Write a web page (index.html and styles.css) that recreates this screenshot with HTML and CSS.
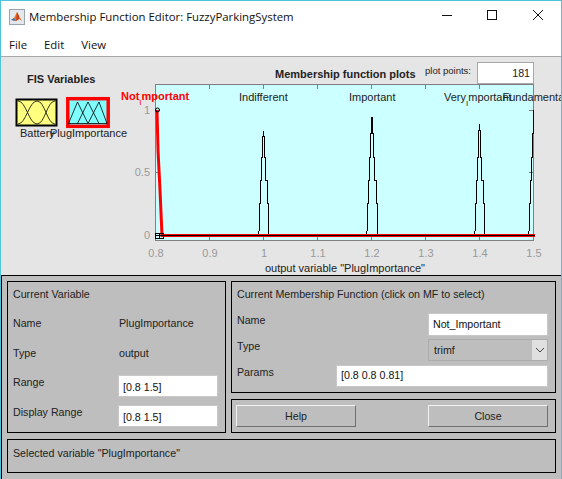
FILE: index.html
```html
<!DOCTYPE html>
<html lang="en">
<head>
    <meta charset="UTF-8">
    <meta name="viewport" content="width=device-width, initial-scale=1.0">
    <title>Membership Function Editor</title>
    <link rel="stylesheet" href="styles.css">
</head>
<body>
    <div class="window">
        <!-- Title bar -->
        <div class="titlebar">
            <svg class="app-icon" width="16" height="16" viewBox="0 0 16 16">
                <rect x="0.5" y="0.5" width="15" height="15" fill="#e4e8ec" stroke="#9aa4ae"/>
                <path d="M2 11 L5 9 L8 3 L10 7 L13 12 L10 10 L7 12 Z" fill="#e8762c"/>
                <path d="M2 11 L5 9 L7 12 Z" fill="#3c78b4"/>
                <path d="M8 3 L10 7 L10 10 L7 12 Z" fill="#c8401c"/>
            </svg>
            <span class="title-text">Membership Function Editor: FuzzyParkingSystem</span>
            <div class="window-buttons">
                <svg class="minimize" width="12" height="12" viewBox="0 0 12 12"><path d="M1 5.5 H11" stroke="#111" fill="none"/></svg>
                <svg width="12" height="12" viewBox="0 0 12 12"><rect x="2.5" y="0.5" width="9" height="9" stroke="#111" fill="none"/></svg>
                <svg width="12" height="12" viewBox="0 0 12 12"><path d="M2 0 L12 10 M12 0 L2 10" stroke="#111" fill="none"/></svg>
            </div>
        </div>

        <!-- Menu bar -->
        <div class="menubar">
            <span>File</span>
            <span>Edit</span>
            <span>View</span>
        </div>

        <!-- Variables and plot -->
        <div class="figure">
            <svg class="canvas" width="560" height="218" viewBox="1 57 560 218">
                <text class="bold-label" x="27" y="83">FIS Variables</text>

                <!-- Battery icon -->
                <rect x="16.5" y="99.5" width="40" height="26" fill="#ffff80" stroke="#000" stroke-width="2"/>
                <path class="mf-thin" d="M18 101 C26 101 29 124 37 124 M18 124 C26 124 29 101 37 101 C45 101 47 124 55 124 M37 124 C45 124 47 101 55 101"/>
                <text class="label" x="20" y="137">Battery</text>

                <!-- PlugImportance icon -->
                <rect x="67.8" y="98.7" width="40.4" height="27.6" fill="#80ffff" stroke="#f00" stroke-width="3.5"/>
                <path class="mf-thin" d="M68.5 123.5 L77.5 102 L88 123.5 M77.5 123.5 L88 102 L99 123.5 M68.5 123.5 H107 M88 123.5 L99 102 L107 123.5"/>
                <text class="label" x="50" y="137">PlugImportance</text>

                <!-- Axes -->
                <rect class="axes" x="155.5" y="84.5" width="378" height="156"/>
                <path class="ticks" d="M209.5 240 V236 M263.5 240 V236 M317.5 240 V236 M371.5 240 V236 M425.5 240 V236 M479.5 240 V236 M209.5 85 V89 M263.5 85 V89 M317.5 85 V89 M371.5 85 V89 M425.5 85 V89 M479.5 85 V89 M156 110.5 H160 M156 172.5 H160 M533 110.5 H529 M533 172.5 H529"/>

                <text class="tick-label" x="150" y="114" text-anchor="end">1</text>
                <text class="tick-label" x="150" y="176" text-anchor="end">0.5</text>
                <text class="tick-label" x="150" y="239" text-anchor="end">0</text>
                <text class="tick-label" x="156" y="257" text-anchor="middle">0.8</text>
                <text class="tick-label" x="210" y="257" text-anchor="middle">0.9</text>
                <text class="tick-label" x="264" y="257" text-anchor="middle">1</text>
                <text class="tick-label" x="318" y="257" text-anchor="middle">1.1</text>
                <text class="tick-label" x="372" y="257" text-anchor="middle">1.2</text>
                <text class="tick-label" x="426" y="257" text-anchor="middle">1.3</text>
                <text class="tick-label" x="480" y="257" text-anchor="middle">1.4</text>
                <text class="tick-label" x="534" y="257" text-anchor="middle">1.5</text>

                <text class="bold-label" x="275" y="78">Membership function plots</text>
                <text class="label" x="345" y="272" text-anchor="middle">output variable "PlugImportance"</text>

                <!-- Membership functions -->
                <path class="mf" d="M257.5 235 L259 231 V203 H260 V180 H261.5 V157 H262.5 V136 H263.5 V131 V136 H264.5 V157 H265.5 V180 H267 V203 H268 V231 L269.5 235"/>
                <path class="mf" d="M365.5 235 L367 231 V203 H368 V180 H369.5 V157 H370.5 V133 H371.5 V117 H372.5 V133 H373.5 V157 H374.5 V180 H376 V203 H377 V231 L378.5 235"/>
                <path class="mf" d="M473.5 235 L475 231 V203 H476 V180 H477.5 V157 H478.5 V130 H479.5 V124 V130 H480.5 V157 H481.5 V180 H483 V203 H484 V231 L485.5 235"/>
                <path class="mf" d="M527.5 235 L529 231 V203 H530 V180 H531.5 V157 H532.5 V133 H533.5 V110"/>
                <path class="mf-red" d="M157 110 L158 150 L160 190 L162 235.5 H535"/>
                <path class="mf" d="M156 235.5 H535"/>
                <path class="handle" d="M155.5 233.5 H163.5 V238.5 H155.5 Z M159.5 233.5 V238.5"/>
                <circle class="handle-dot" cx="157.5" cy="110" r="2"/>

                <!-- MF names -->
                <text class="mf-name selected" x="121" y="100">Not<tspan class="sub" dy="5">I</tspan><tspan dy="-5">mportant</tspan></text>
                <text class="mf-name" x="239" y="101">Indifferent</text>
                <text class="mf-name" x="349" y="101">Important</text>
                <text class="mf-name" x="444" y="101">Very<tspan class="sub" dy="5">I</tspan><tspan dy="-5">mportant</tspan></text>
                <text class="mf-name" x="502.5" y="101">Fundamental</text>
            </svg>
            <span class="plot-points-label">plot points:</span>
            <div class="plot-points">181</div>
        </div>

        <!-- Controls -->
        <div class="controls">
            <div class="panels">
                <div class="panel variable-panel">
                    <div class="panel-title">Current Variable</div>
                    <div class="variable-row"><span>Name</span><span class="value">PlugImportance</span></div>
                    <div class="variable-row"><span>Type</span><span class="value">output</span></div>
                    <div class="variable-row field-row first-field"><span>Range</span><div class="field range-field">[0.8 1.5]</div></div>
                    <div class="variable-row field-row"><span>Display Range</span><div class="field range-field">[0.8 1.5]</div></div>
                </div>
                <div class="right-column">
                    <div class="panel mf-panel">
                        <div class="panel-title">Current Membership Function (click on MF to select)</div>
                        <div class="mf-row"><span>Name</span><div class="field mf-field">Not_Important</div></div>
                        <div class="mf-row"><span>Type</span>
                            <div class="select">
                                <span class="select-value">trimf</span>
                                <div class="select-arrow">
                                    <svg width="10" height="6" viewBox="0 0 10 6"><path d="M1 1 L5 5 L9 1" stroke="#444" fill="none"/></svg>
                                </div>
                            </div>
                        </div>
                        <div class="mf-row"><span>Params</span><div class="field params-field">[0.8 0.8 0.81]</div></div>
                    </div>
                    <div class="panel button-panel">
                        <div class="button">Help</div>
                        <div class="button">Close</div>
                    </div>
                </div>
            </div>
            <div class="panel status">Selected variable "PlugImportance"</div>
        </div>
    </div>
</body>
</html>
```

FILE: styles.css
```css
/* Basic Styling */
body {
    margin: 0;
    width: 562px;
    height: 479px;
    overflow: hidden;
    font-family: "Liberation Sans", Arial, sans-serif;
    font-size: 10.67px;
    color: #222;
}

.window {
    height: 478px;
    border: 1px solid #4fc3dc;
    display: flex;
    flex-direction: column;
    background: #e5e5e5;
}

/* Title bar */
.titlebar {
    height: 31px;
    display: flex;
    align-items: center;
    background: #fff;
    padding-left: 8px;
}

.app-icon {
    margin-right: 4px;
}

.title-text {
    font-family: "Open Sans", sans-serif;
    font-size: 11.4px;
    color: #111;
}

.window-buttons {
    margin-left: auto;
    margin-bottom: 1px;
    display: flex;
    gap: 34px;
    padding-right: 18px;
}

.minimize {
    margin-right: -2px;
}

/* Menu bar */
.menubar {
    height: 24px;
    display: flex;
    gap: 17px;
    padding-left: 8px;
    align-items: center;
    background: #fff;
    border-bottom: 1px solid #a8a8a8;
    font-family: "Open Sans", sans-serif;
    font-size: 11.4px;
    color: #111;
}

/* Figure */
.figure {
    position: relative;
    height: 218px;
}

.canvas {
    display: block;
}

.label {
    font-size: 11px;
    fill: #222;
}

.bold-label {
    font-size: 11px;
    font-weight: bold;
    fill: #222;
}

.tick-label {
    font-size: 11px;
    fill: #999;
}

.axes {
    fill: #ccffff;
    stroke: #808080;
}

.ticks {
    stroke: #808080;
    fill: none;
}

.mf {
    fill: none;
    stroke: #000;
    shape-rendering: crispEdges;
}

.mf-thin {
    fill: none;
    stroke: #000;
    stroke-width: 0.8;
}

.mf-red {
    fill: none;
    stroke: #f00;
    stroke-width: 3;
}

.handle {
    fill: none;
    stroke: #000;
    shape-rendering: crispEdges;
}

.handle-dot {
    fill: none;
    stroke: #000;
}

.mf-name {
    font-size: 11px;
    fill: #222;
}

.mf-name.selected {
    font-weight: bold;
    fill: #f00;
}

.sub {
    font-size: 8px;
    font-weight: normal;
}

.plot-points-label {
    position: absolute;
    left: 424px;
    top: 8px;
    font-size: 9.5px;
}

.plot-points {
    position: absolute;
    left: 476px;
    top: 5px;
    width: 57px;
    height: 22px;
    box-sizing: border-box;
    background: #fff;
    border: 1px solid #a8a8a8;
    text-align: right;
    padding: 4px 3px 0 0;
}

/* Controls */
.controls {
    flex: 1;
    background: #bebebe;
    border-top: 1px solid #000;
    border-left: 1px solid #000;
    padding: 5px 5px 5px 5px;
    display: flex;
    flex-direction: column;
    gap: 6px;
}

.panels {
    display: flex;
    gap: 5px;
}

.panel {
    border: 1px solid #000;
    box-sizing: border-box;
}

.panel-title {
    height: 13px;
}

.variable-panel {
    width: 219px;
    height: 152px;
    padding: 6px 5px;
}

.variable-panel .panel-title {
    margin-bottom: 7px;
}

.variable-row {
    display: flex;
    align-items: center;
    height: 30px;
}

.variable-row > span:first-child {
    width: 106px;
}

.first-field {
    margin-top: -1px;
}

.field {
    background: #fff;
    border: 1px solid #c8c8c8;
    box-sizing: border-box;
    color: #111;
}

.range-field {
    width: 100px;
    height: 22px;
    padding: 5px 4px;
    margin-left: -1px;
    align-self: flex-end;
}

.right-column {
    flex: 1;
    display: flex;
    flex-direction: column;
    gap: 6px;
}

.mf-panel {
    height: 112px;
    padding: 6px 7px 0 5px;
}

.mf-panel .panel-title {
    margin-bottom: 10px;
}

.mf-row {
    display: flex;
    align-items: center;
    justify-content: space-between;
    height: 26px;
}

.mf-row > span {
    margin-bottom: 8px;
}

.mf-field {
    width: 120px;
    height: 23px;
    padding: 4px;
}

.params-field {
    width: 212px;
    height: 22px;
    padding: 3px 4px;
}

.select {
    width: 120px;
    height: 22px;
    box-sizing: border-box;
    display: flex;
    align-items: center;
    justify-content: space-between;
    padding-left: 5px;
    background: #bebebe;
    border: 1px solid #acacac;
}

.select-arrow {
    width: 15px;
    height: 20px;
    display: flex;
    align-items: center;
    justify-content: center;
    background: #e0e0e0;
}

.button-panel {
    height: 34px;
    display: flex;
    align-items: center;
    justify-content: space-between;
    padding: 0 7px 0 4px;
}

.button {
    width: 120px;
    height: 22px;
    box-sizing: border-box;
    text-align: center;
    line-height: 20px;
    border: 1px solid;
    border-color: #f2f2f2 #707070 #707070 #f2f2f2;
    background: #bebebe;
}

.status {
    height: 34px;
    padding: 7px 5px;
}
```
